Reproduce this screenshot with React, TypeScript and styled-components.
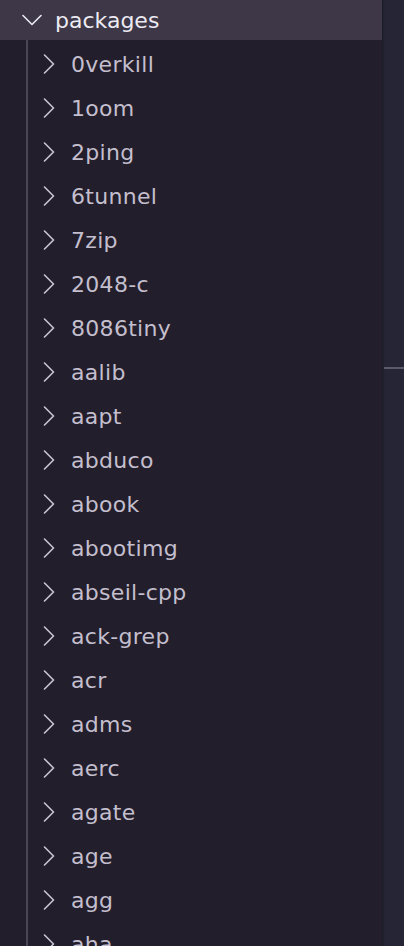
import React from 'react';
import styled, { createGlobalStyle } from 'styled-components';

const GlobalStyle = createGlobalStyle`
  html, body {
    margin: 0;
    padding: 0;
    background: #231e2b;
    overflow: hidden;
  }
`;

const packages = [
  '0verkill', '1oom', '2ping', '6tunnel', '7zip', '2048-c', '8086tiny', 'aalib',
  'aapt', 'abduco', 'abook', 'abootimg', 'abseil-cpp', 'ack-grep', 'acr', 'adms',
  'aerc', 'agate', 'age', 'agg', 'aha',
];

const Frame = styled.div`
  display: flex;
  width: 404px;
  height: 946px;
  overflow: hidden;
  background: #231e2b;
  font-family: "DejaVu Sans", "Noto Sans", sans-serif;
`;

const Tree = styled.div`
  flex: 1;
  display: flex;
  flex-direction: column;
  min-width: 0;
`;

const FolderRow = styled.div`
  display: flex;
  align-items: center;
  height: 40px;
  padding-left: 22px;
  gap: 13px;
  background: #3d3747;
  color: #eceaf2;
  font-size: 22px;
  flex-shrink: 0;
`;

const Children = styled.div`
  display: flex;
  flex-direction: column;
  margin-left: 26px;
  padding-top: 2px;
  border-left: 2px solid #4b4656;
`;

const ItemRow = styled.div`
  display: flex;
  align-items: center;
  height: 44px;
  padding-left: 11px;
  gap: 12px;
  color: #c3bfce;
  font-size: 22px;
  letter-spacing: 0.3px;
  flex-shrink: 0;
`;

const Label = styled.span`
  line-height: 1;
  padding-top: 2px;
  white-space: nowrap;
`;

const Scroll = styled.div`
  width: 22px;
  flex-shrink: 0;
  display: flex;
  flex-direction: column;
  background: #262535;
  box-shadow: inset 3px 0 3px -2px rgba(0, 0, 0, 0.35);
`;

const ScrollMark = styled.div`
  margin-top: 367px;
  margin-left: 2px;
  height: 2px;
  background: #5c5a6a;
`;

function Chevron({ open }: { open?: boolean }) {
  return (
    <svg width={20} height={20} viewBox="0 0 20 20" fill="none">
      <path
        d={open ? 'M1 5.5 L10 14.5 L19 5.5' : 'M5.5 1 L14.5 10 L5.5 19'}
        stroke={open ? '#eceaf2' : '#c9c6d2'}
        strokeWidth={1.6}
        strokeLinecap="round"
        strokeLinejoin="round"
      />
    </svg>
  );
}

export default function App() {
  return (
    <>
      <GlobalStyle />
      <Frame>
        <Tree>
          <FolderRow>
            <Chevron open />
            <Label>packages</Label>
          </FolderRow>
          <Children>
            {packages.map((name) => (
              <ItemRow key={name}>
                <Chevron />
                <Label>{name}</Label>
              </ItemRow>
            ))}
          </Children>
        </Tree>
        <Scroll>
          <ScrollMark />
        </Scroll>
      </Frame>
    </>
  );
}
